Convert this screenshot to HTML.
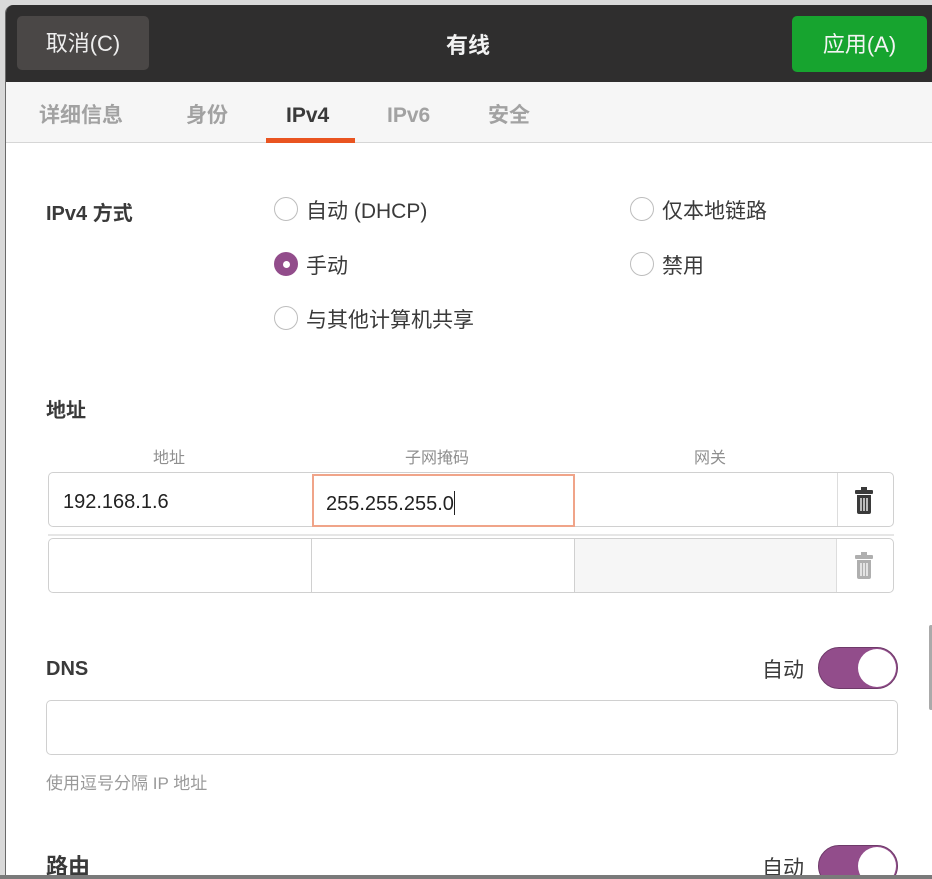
<!DOCTYPE html>
<html><head><meta charset="utf-8"><style>
*{box-sizing:border-box;margin:0;padding:0}
body{width:932px;height:879px;overflow:hidden;background:#d9d9d9;font-family:"Liberation Sans","Noto Sans CJK SC",sans-serif;color:#3d3d3d;position:relative}
.a{position:absolute;white-space:nowrap}
#win{position:absolute;left:5px;top:5px;width:927px;height:870px;background:#fff;border-left:1px solid #6a6a6a;border-radius:8px 0 0 0;overflow:hidden}
#hdr{position:absolute;left:0;top:0;width:100%;height:77px;background:#2f2e2e}
.btn{position:absolute;border-radius:5px;color:#eee;font-size:22px;text-align:center;line-height:56px}
#tabs{position:absolute;left:0;top:77px;width:100%;height:61px;background:#f6f6f6;border-bottom:1px solid #d6d6d6}
.tab{position:absolute;top:19px;font-size:21px;font-weight:bold;color:#a2a2a2}
.radio{position:absolute;width:24px;height:24px;border-radius:50%;border:1px solid #bdbdbd;background:#fff}
.lbl{font-size:21px;color:#3a3a3a}
.b{font-weight:bold;font-size:20px;color:#3a3a3a}
.cell{position:absolute;border:1px solid #d0d0d0;background:#fff}
.sw{position:absolute;width:80px;height:42px;border-radius:21px;background:#924d8b;border:1px solid #6e3a69}
.sw i{position:absolute;right:1px;top:1px;width:38px;height:38px;border-radius:50%;background:#fff}
</style></head><body>
<div id="win">
 <div id="hdr">
  <div class="btn" style="left:11px;top:11px;width:132px;height:54px;background:#4a4746">取消(C)</div>
  <div class="a" style="left:440px;top:23px;font-size:22px;font-weight:bold;color:#f2f2f2">有线</div>
  <div class="btn" style="left:786px;top:11px;width:135px;height:56px;background:#17a42f;color:#f4f4f4;line-height:58px">应用(A)</div>
 </div>
 <div id="tabs">
  <div class="tab" style="left:33px;top:17px">详细信息</div>
  <div class="tab" style="left:180px;top:17px">身份</div>
  <div class="tab" style="left:280px;color:#3a3a3a;top:22px">IPv4</div>
  <div class="tab" style="left:381px;top:22px">IPv6</div>
  <div class="tab" style="left:482px;top:17px">安全</div>
  <div class="a" style="left:260px;top:56px;width:89px;height:5px;background:#e95420"></div>
 </div>
 <div class="a b" style="left:40px;top:192px">IPv4 方式</div>
 <div class="radio" style="left:268px;top:192px"></div><div class="a lbl" style="left:300px;top:190px">自动 (DHCP)</div>
 <div class="radio" style="left:268px;top:247px;background:#924d8b;border-color:#924d8b"><i style="position:absolute;left:8px;top:8px;width:7px;height:7px;border-radius:50%;background:#fff"></i></div><div class="a lbl" style="left:300px;top:245px">手动</div>
 <div class="radio" style="left:268px;top:301px"></div><div class="a lbl" style="left:300px;top:299px">与其他计算机共享</div>
 <div class="radio" style="left:624px;top:192px"></div><div class="a lbl" style="left:656px;top:190px">仅本地链路</div>
 <div class="radio" style="left:624px;top:247px"></div><div class="a lbl" style="left:656px;top:245px">禁用</div>
 <div class="a b" style="left:40px;top:389px">地址</div>
 <div class="a" style="left:147px;top:439px;font-size:16px;color:#8f8f8f">地址</div>
 <div class="a" style="left:399px;top:439px;font-size:16px;color:#8f8f8f">子网掩码</div>
 <div class="a" style="left:688px;top:439px;font-size:16px;color:#8f8f8f">网关</div>
 <div class="cell" style="left:42px;top:467px;width:846px;height:55px;border-radius:5px"></div>
 <div class="a" style="left:57px;top:486px;font-size:20px;color:#222">192.168.1.6</div>
 <div class="a" style="left:306px;top:469px;width:263px;height:53px;border:2px solid #f0a489;background:#fff"></div>
 <div class="a" style="left:320px;top:486px;font-size:20px;color:#222">255.255.255.0<span style="display:inline-block;width:1px;height:24px;background:#222;vertical-align:-5px"></span></div>
 <div class="a" style="left:831px;top:468px;width:1px;height:53px;background:#ddd"></div>
 <div class="a" style="left:42px;top:529px;width:846px;height:2px;background:#e6e6e6"></div>
 <div class="cell" style="left:42px;top:533px;width:846px;height:55px;border-radius:5px"></div>
 <div class="a" style="left:305px;top:534px;width:1px;height:53px;background:#d0d0d0"></div>
 <div class="a" style="left:568px;top:534px;width:263px;height:53px;background:#f6f6f6;border-left:1px solid #d0d0d0;border-right:1px solid #ddd"></div>
 <svg class="a" style="left:848px;top:482px" width="20" height="28" viewBox="0 0 20 28"><rect x="7" y="0" width="6" height="3" fill="#3a3a3a"/><rect x="1" y="3" width="18" height="4" rx="1" fill="#3a3a3a"/><path d="M3 8h14v17a2 2 0 0 1-2 2H5a2 2 0 0 1-2-2z" fill="#3a3a3a"/><path d="M7 11v13M10 11v13M13 11v13" stroke="#fff" stroke-width="1.3"/></svg>
 <svg class="a" style="left:848px;top:547px" width="20" height="28" viewBox="0 0 20 28" opacity=".4"><rect x="7" y="0" width="6" height="3" fill="#3a3a3a"/><rect x="1" y="3" width="18" height="4" rx="1" fill="#3a3a3a"/><path d="M3 8h14v17a2 2 0 0 1-2 2H5a2 2 0 0 1-2-2z" fill="#3a3a3a"/><path d="M7 11v13M10 11v13M13 11v13" stroke="#fff" stroke-width="1.3"/></svg>
 <div class="a b" style="left:40px;top:653px">DNS</div>
 <div class="a lbl" style="left:756px;top:649px">自动</div>
 <div class="sw" style="left:812px;top:642px"><i></i></div>
 <div class="cell" style="left:40px;top:695px;width:852px;height:55px;border-radius:5px"></div>
 <div class="a" style="left:40px;top:764px;font-size:17px;color:#9a9a9a">使用逗号分隔 IP 地址</div>
 <div class="a b" style="left:40px;top:844px;font-size:22px">路由</div>
 <div class="a lbl" style="left:756px;top:847px">自动</div>
 <div class="sw" style="left:812px;top:840px"><i></i></div>
 <div class="a" style="left:923px;top:620px;width:4px;height:85px;background:#aaa;border-radius:2px"></div>
</div>
<div class="a" style="left:0;top:875px;width:932px;height:4px;background:#7a7a7a"></div>
</body></html>
